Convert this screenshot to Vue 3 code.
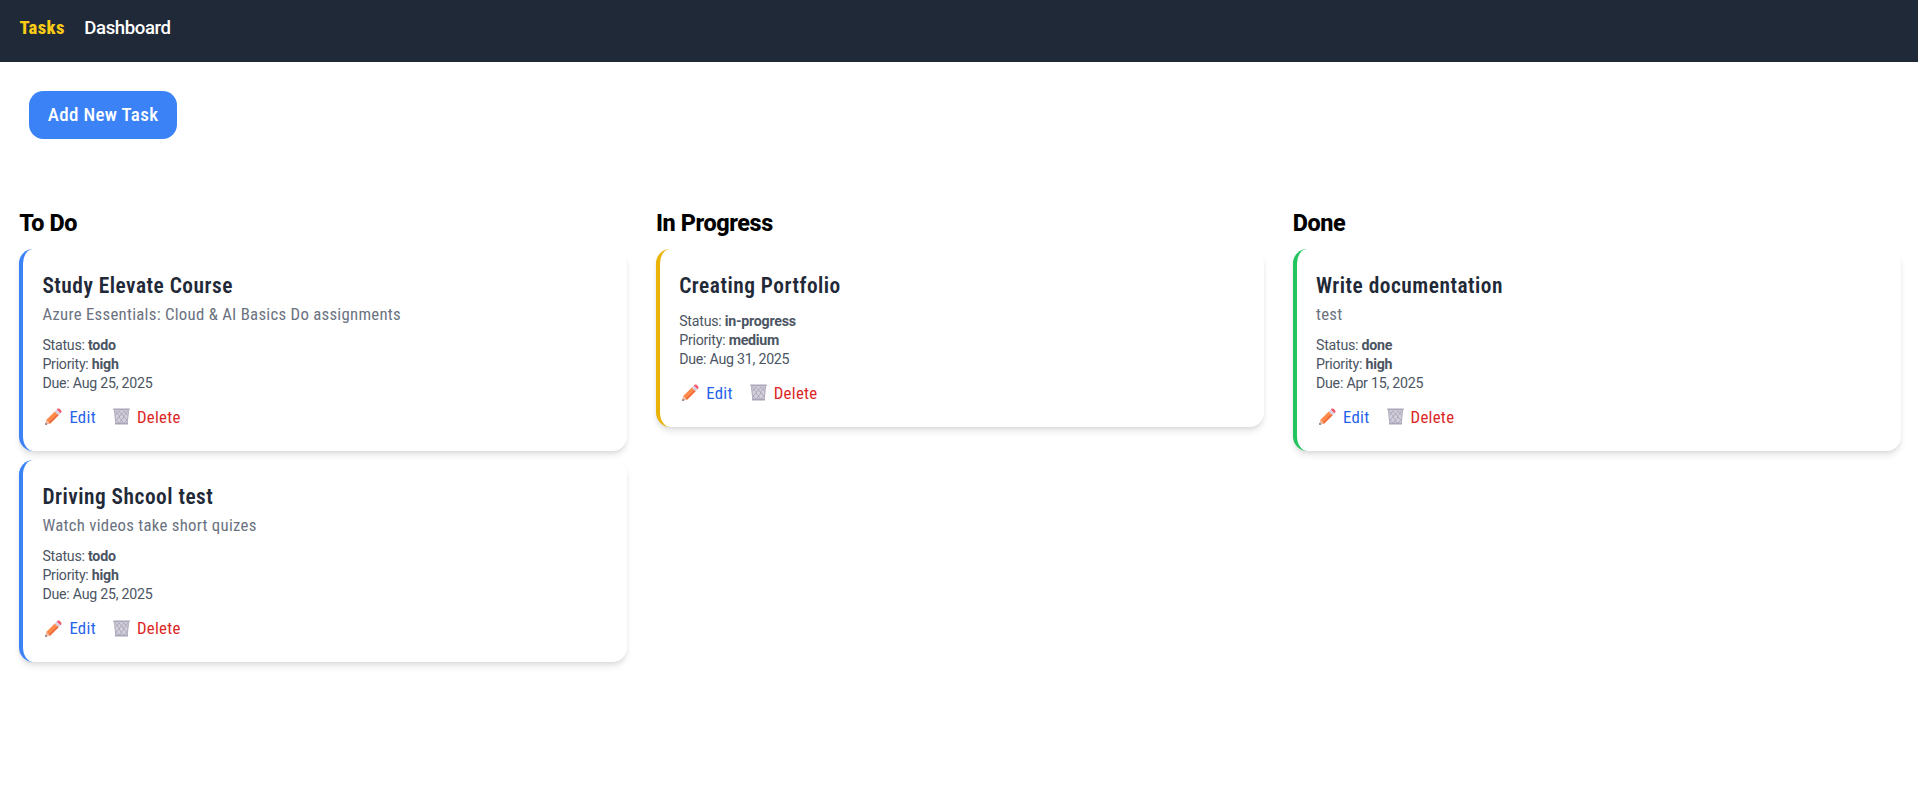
<script setup>
const columns = [
  {
    name: 'To Do', tone: 'blue', tasks: [
      { title: 'Study Elevate Course', text: 'Azure Essentials: Cloud & AI Basics Do assignments', status: 'todo', priority: 'high', due: 'Aug 25, 2025' },
      { title: 'Driving Shcool test', text: 'Watch videos take short quizes', status: 'todo', priority: 'high', due: 'Aug 25, 2025' },
    ],
  },
  {
    name: 'In Progress', tone: 'yellow', tasks: [
      { title: 'Creating Portfolio', text: '', status: 'in-progress', priority: 'medium', due: 'Aug 31, 2025' },
    ],
  },
  {
    name: 'Done', tone: 'green', tasks: [
      { title: 'Write documentation', text: 'test', status: 'done', priority: 'high', due: 'Apr 15, 2025' },
    ],
  },
]
</script>

<template>
  <div class="page">
    <nav class="nav">
      <a class="link active">Tasks</a>
      <a class="link">Dashboard</a>
    </nav>
    <button class="add">Add New Task</button>
    <main class="board">
      <section v-for="c in columns" :key="c.name" class="column">
        <h2 class="heading">{{ c.name }}</h2>
        <article v-for="t in c.tasks" :key="t.title" class="card" :class="c.tone">
          <h3 class="title">{{ t.title }}</h3>
          <p v-if="t.text" class="text">{{ t.text }}</p>
          <div class="meta">
            <div>Status: <strong>{{ t.status }}</strong></div>
            <div>Priority: <strong>{{ t.priority }}</strong></div>
            <div>Due: {{ t.due }}</div>
          </div>
          <div class="actions">
            <button class="action edit">
              <svg class="icon" viewBox="0 0 17 17">
                <path d="M0.2 16.8 1.2 12 5 15.8Z" fill="#e9b9a4" />
                <path d="M0.2 16.8 0.6 14.8 2.2 16.4Z" fill="#5b4650" />
                <path d="M1.2 12 9.8 3.4 13.6 7.2 5 15.8Z" fill="#ff8a4c" />
                <path d="M3.8 14.5 12.5 6.1 13.6 7.2 5 15.8Z" fill="#ee6c3d" />
                <path d="M9.8 3.4 11.8 1.4 15.6 5.2 13.6 7.2Z" fill="#d8cfe2" />
                <path d="M11.8 1.4 12.4 0.8Q13.5 0 14.6 0.8L16.2 2.4Q17 3.6 16.2 4.6L15.6 5.2Z" fill="#f4596a" />
              </svg>
              <span>Edit</span>
            </button>
            <button class="action delete">
              <svg class="icon" viewBox="0 0 17 17">
                <path d="M1.2 2H15.8L14.6 16H2.4Z" fill="#d3d0dc" />
                <path d="M2.2 3 6.5 8 3.2 12 6.5 15.5M6 3 11 9 6.5 15M11 3 6 9 10.5 15.5M14.8 3 10.5 8 13.8 12 10.5 15.5M2.5 7.5 6 3M14.5 7.5 11 3" fill="none" stroke="#a5a0b3" stroke-width="0.8" />
                <path d="M1.5 2.5 2.8 15.5M15.5 2.5 14.2 15.5" stroke="#b2adbf" stroke-width="1" />
                <path d="M0.3 0.6H16.7V2.3H0.3ZM2 14.8H15V16.4H2Z" fill="#aaa5b8" />
              </svg>
              <span>Delete</span>
            </button>
          </div>
        </article>
      </section>
    </main>
  </div>
</template>

<style>
body { background: #fff; }
</style>

<style scoped>
.page {
  min-height: 810px;
  font-family: Roboto, "Open Sans", sans-serif;
  font-stretch: 87.5%;
}
.nav {
  box-sizing: border-box;
  height: 62px;
  padding: 13.5px 19.5px;
  display: flex;
  gap: 19.5px;
  background: #1f2937;
  color: #fff;
  font-size: 18.6px;
  line-height: 28px;
}
.link { font-weight: 500; font-stretch: 100%; letter-spacing: -0.4px; }
.active { color: #facc15; font-weight: 800; font-stretch: 87.5%; letter-spacing: 0.4px; }
button {
  font: inherit;
  letter-spacing: inherit;
  border: 0;
  margin: 0;
  padding: 0;
  background: none;
}
.add {
  display: block;
  width: 148px;
  height: 48px;
  margin: 29px 0 0 29px;
  padding-bottom: 2px;
  border-radius: 14.4px;
  background: #3b82f6;
  color: #fff;
  font-size: 19px;
  font-weight: 500;
  text-align: center;
  letter-spacing: 0.35px;
}
.board {
  display: grid;
  grid-template-columns: repeat(3, 608px);
  gap: 28.8px;
  margin: 66px 0 0 19.2px;
}
.heading {
  margin: 0 0 9.6px;
  padding-top: 2px;
  font-size: 23.4px;
  line-height: 32.4px;
  font-weight: 800;
  font-stretch: 100%;
  letter-spacing: -0.4px;
  color: #000;
}
.card {
  box-sizing: border-box;
  padding: 19.2px 19.2px 21.6px;
  border-left: 4px solid;
  border-radius: 14.4px;
  background: #fff;
  box-shadow: 0 4.8px 7.2px -1.2px rgba(0, 0, 0, 0.1), 0 2.4px 4.8px -2.4px rgba(0, 0, 0, 0.1);
}
.card + .card { margin-top: 9.6px; }
.blue { border-color: #3b82f6; }
.yellow { border-color: #eab308; }
.green { border-color: #22c55e; }
.title {
  margin: 0;
  padding-top: 2px;
  font-size: 21.4px;
  line-height: 31.6px;
  font-weight: 650;
  letter-spacing: 0.5px;
  color: #1f2937;
}
.text {
  margin: 0;
  font-size: 16.8px;
  line-height: 24px;
  letter-spacing: 0.27px;
  color: #6b7280;
}
.meta {
  margin-top: 10.1px;
  font-size: 14.2px;
  line-height: 19.2px;
  font-stretch: 100%;
  letter-spacing: -0.24px;
  color: #4b5563;
}
.meta strong { font-weight: 700; }
.actions {
  display: flex;
  gap: 17px;
  margin: 11.5px 0 0 3px;
  font-size: 16.8px;
  line-height: 24px;
  letter-spacing: 0.3px;
}
.action {
  display: flex;
  align-items: center;
  gap: 7px;
}
.icon { width: 17px; height: 17px; }
.edit { color: #2563eb; }
.delete { color: #dc2626; }
</style>
